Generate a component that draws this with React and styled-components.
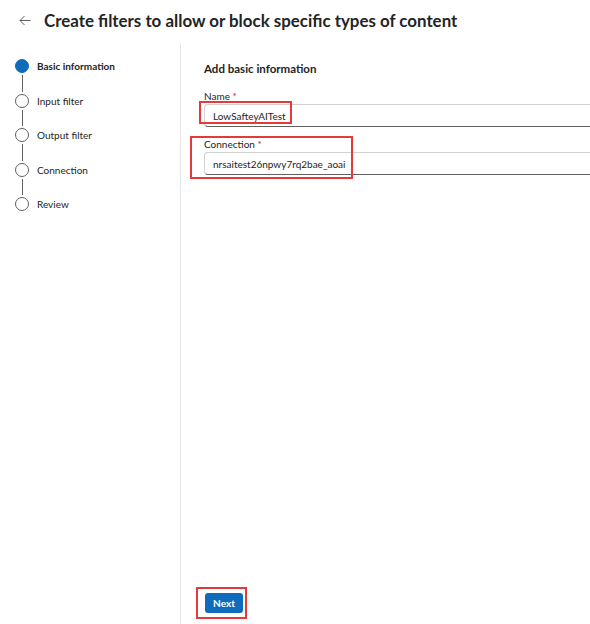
import React from "react";
import styled, { createGlobalStyle } from "styled-components";

const steps = [
  { label: "Basic information", active: true },
  { label: "Input filter" },
  { label: "Output filter" },
  { label: "Connection" },
  { label: "Review" },
];

const App = () => {
  return (
    <>
      <GlobalStyle />
      <Page>
        <Header>
          <BackButton aria-label="Back">
            <svg width="12" height="11" viewBox="0 0 12 11" fill="none">
              <path d="M11.5 5.5H1M5.5 1L1 5.5L5.5 10" stroke="#616161" strokeWidth="1" />
            </svg>
          </BackButton>
          <Title>Create filters to allow or block specific types of content</Title>
        </Header>
        <Body>
          <Sidebar>
            {steps.map((step, i) => (
              <React.Fragment key={step.label}>
                {i > 0 && <Connector />}
                <StepRow>
                  <StepDot $active={step.active} />
                  <StepLabel $active={step.active}>{step.label}</StepLabel>
                </StepRow>
              </React.Fragment>
            ))}
          </Sidebar>
          <Main>
            <SectionTitle>Add basic information</SectionTitle>
            <Field>
              <Label>
                Name <Required>*</Required>
              </Label>
              <InputBox>LowSafteyAITest</InputBox>
              <Highlight $top={12} $left={-5} $width={93} $height={23} />
            </Field>
            <Field $gap={10}>
              <Label>
                Connection <Required>*</Required>
              </Label>
              <InputBox>nrsaitest26npwy7rq2bae_aoai</InputBox>
              <Highlight $top={-1} $left={-14} $width={163} $height={43} />
            </Field>
            <Footer>
              <Field>
                <PrimaryButton>Next</PrimaryButton>
                <Highlight $top={-6} $left={-8} $width={51} $height={32} />
              </Field>
            </Footer>
          </Main>
        </Body>
      </Page>
    </>
  );
};

const GlobalStyle = createGlobalStyle`
  html, body {
    margin: 0;
    padding: 0;
    background: #ffffff;
  }
  body {
    font-family: Lato, "Noto Sans", sans-serif;
    color: #242424;
    overflow: hidden;
  }
`;

const Page = styled.div`
  width: 590px;
  height: 624px;
  display: flex;
  flex-direction: column;
  background: #ffffff;
  overflow: hidden;
`;

const Header = styled.header`
  height: 43px;
  display: flex;
  align-items: center;
  padding-left: 19px;
  gap: 13px;
  box-sizing: border-box;
  padding-bottom: 3px;
`;

const BackButton = styled.div`
  width: 12px;
  height: 11px;
  display: flex;
`;

const Title = styled.h1`
  margin: 0;
  font-size: 16.9px;
  font-weight: 700;
  color: #242424;
`;

const Body = styled.div`
  flex: 1;
  display: flex;
  min-height: 0;
`;

const Sidebar = styled.nav`
  width: 181px;
  flex-shrink: 0;
  box-sizing: border-box;
  border-right: 1px solid #e6e6e6;
  padding: 16px 0 0 15px;
  display: flex;
  flex-direction: column;
`;

const StepRow = styled.div`
  display: flex;
  align-items: center;
  gap: 8px;
  height: 14px;
`;

const StepDot = styled.span`
  width: 14px;
  height: 14px;
  box-sizing: border-box;
  border-radius: 50%;
  border: 1px solid ${(p) => (p.$active ? "#0f6cbd" : "#616161")};
  background: ${(p) => (p.$active ? "#0f6cbd" : "#ffffff")};
  flex-shrink: 0;
`;

const StepLabel = styled.span`
  font-size: 10px;
  font-weight: ${(p) => (p.$active ? 700 : 400)};
  color: #242424;
  white-space: nowrap;
`;

const Connector = styled.span`
  width: 1px;
  height: 16.5px;
  margin: 2px 0 2px 6.5px;
  background: #616161;
`;

const Main = styled.main`
  flex: 1;
  display: flex;
  flex-direction: column;
  padding: 18px 0 11px 23px;
  min-width: 0;
`;

const SectionTitle = styled.h2`
  margin: 0 0 12px;
  font-size: 11.5px;
  font-weight: 700;
  color: #242424;
  line-height: 16px;
`;

const Field = styled.div`
  position: relative;
  display: flex;
  flex-direction: column;
  margin-top: ${(p) => p.$gap || 0}px;
`;

const Label = styled.label`
  font-size: 10px;
  color: #242424;
  line-height: 15px;
`;

const Required = styled.span`
  color: #c50f1f;
`;

const InputBox = styled.div`
  width: 420px;
  height: 23px;
  box-sizing: border-box;
  border: 1px solid #d1d1d1;
  border-bottom-color: #616161;
  border-radius: 4px;
  padding: 0 8px;
  display: flex;
  align-items: center;
  font-size: 10px;
  color: #242424;
  background: #ffffff;
`;

const Highlight = styled.span`
  position: absolute;
  top: ${(p) => p.$top}px;
  left: ${(p) => p.$left}px;
  width: ${(p) => p.$width}px;
  height: ${(p) => p.$height}px;
  box-sizing: border-box;
  border: 2px solid #e5393a;
  pointer-events: none;
`;

const Footer = styled.div`
  margin-top: auto;
  display: flex;
`;

const PrimaryButton = styled.button`
  width: 38px;
  height: 20px;
  margin-left: 1px;
  padding: 0;
  border: none;
  border-radius: 3px;
  background: #0f6cbd;
  color: #ffffff;
  font-family: Lato, "Noto Sans", sans-serif;
  font-size: 10px;
  font-weight: 700;
`;

export default App;
